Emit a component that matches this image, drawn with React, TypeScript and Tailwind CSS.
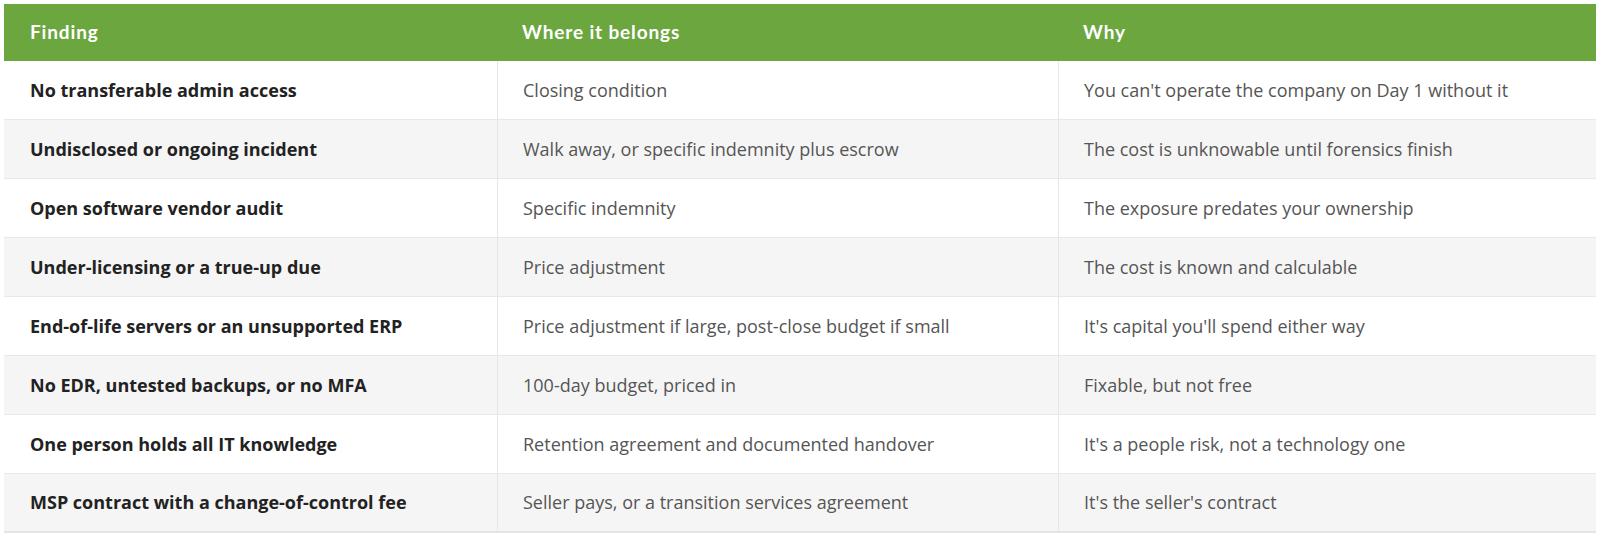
import React from "react";

const rows: [string, string, string][] = [
  ["No transferable admin access", "Closing condition", "You can't operate the company on Day 1 without it"],
  ["Undisclosed or ongoing incident", "Walk away, or specific indemnity plus escrow", "The cost is unknowable until forensics finish"],
  ["Open software vendor audit", "Specific indemnity", "The exposure predates your ownership"],
  ["Under-licensing or a true-up due", "Price adjustment", "The cost is known and calculable"],
  ["End-of-life servers or an unsupported ERP", "Price adjustment if large, post-close budget if small", "It's capital you'll spend either way"],
  ["No EDR, untested backups, or no MFA", "100-day budget, priced in", "Fixable, but not free"],
  ["One person holds all IT knowledge", "Retention agreement and documented handover", "It's a people risk, not a technology one"],
  ["MSP contract with a change-of-control fee", "Seller pays, or a transition services agreement", "It's the seller's contract"],
];

export default function App() {
  return (
    <div className="w-[1600px] h-[537px] bg-white p-1 font-['Open_Sans',sans-serif]">
      <div className="w-[1592px]">
        <div className="grid grid-cols-[493px_561px_538px] h-[57px] bg-[#6ba63f] text-white font-['Lato',sans-serif] font-bold text-[19px] tracking-[0.045em]">
          <div className="flex items-center pl-[26px]">Finding</div>
          <div className="flex items-center pl-[25px]">Where it belongs</div>
          <div className="flex items-center pl-[25px]">Why</div>
        </div>
        {rows.map((r, i) => (
          <div
            key={i}
            className={`grid grid-cols-[493px_561px_538px] h-[59px] text-[18px] ${i % 2 === 1 ? "bg-[#f5f5f5]" : "bg-white"} ${i === rows.length - 1 ? "border-b-2 border-[#e4e4e4]" : "border-b border-[#e8e8e8]"}`}
          >
            <div className="flex items-center pl-[26px] font-bold text-[#222222]">{r[0]}</div>
            <div className="flex items-center pl-[25px] text-[#555555] border-l border-[#e6e6e6]">{r[1]}</div>
            <div className="flex items-center pl-[25px] text-[#555555] border-l border-[#e6e6e6]">{r[2]}</div>
          </div>
        ))}
      </div>
    </div>
  );
}
